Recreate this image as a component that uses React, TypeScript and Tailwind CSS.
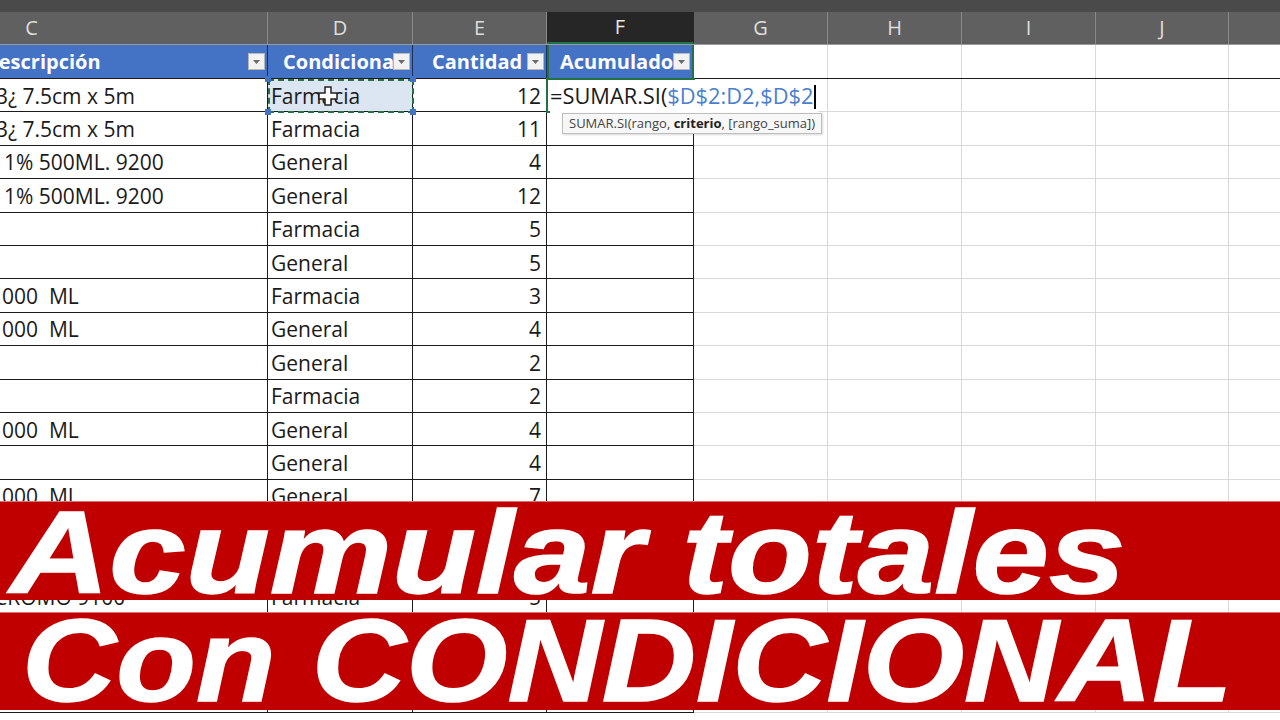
import React from "react";

const W = [
  "w-[472px]",
  "w-[145px]",
  "w-[134px]",
  "w-[147px]",
  "w-[134px]",
  "w-[134px]",
  "w-[134px]",
  "w-[133px]",
  "w-[200px]",
];
const LETTERS = ["C", "D", "E", "F", "G", "H", "I", "J", "K"];

type Row = { c: string; cpad: string; d: string; e: string };

const ROWS: Row[] = [
  { c: "3¿ 7.5cm x 5m", cpad: "pl-[200px]", d: "Farmacia", e: "12" },
  { c: "3¿ 7.5cm x 5m", cpad: "pl-[200px]", d: "Farmacia", e: "11" },
  { c: "1% 500ML. 9200", cpad: "pl-[208px]", d: "General", e: "4" },
  { c: "1% 500ML. 9200", cpad: "pl-[208px]", d: "General", e: "12" },
  { c: "", cpad: "pl-[200px]", d: "Farmacia", e: "5" },
  { c: "", cpad: "pl-[200px]", d: "General", e: "5" },
  { c: "1000  ML", cpad: "pl-[194px]", d: "Farmacia", e: "3" },
  { c: "1000  ML", cpad: "pl-[194px]", d: "General", e: "4" },
  { c: "", cpad: "pl-[200px]", d: "General", e: "2" },
  { c: "", cpad: "pl-[200px]", d: "Farmacia", e: "2" },
  { c: "1000  ML", cpad: "pl-[194px]", d: "General", e: "4" },
  { c: "", cpad: "pl-[200px]", d: "General", e: "4" },
  { c: "1000  ML", cpad: "pl-[194px]", d: "General", e: "7" },
  { c: "", cpad: "pl-[200px]", d: "Farmacia", e: "6" },
  { c: "", cpad: "pl-[200px]", d: "General", e: "3" },
  { c: "CROMO 9100", cpad: "pl-[198px]", d: "Farmacia", e: "5" },
  { c: "", cpad: "pl-[200px]", d: "General", e: "2" },
  { c: "", cpad: "pl-[200px]", d: "Farmacia", e: "4" },
  { c: "", cpad: "pl-[200px]", d: "General", e: "1" },
];

function FilterBtn() {
  return (
    <div className="absolute right-[2px] top-[8px] w-[17px] h-[17px] bg-[#f2f2f2] border border-[#b8b8b8] flex items-center justify-center">
      <svg width="9" height="6" viewBox="0 0 9 6">
        <path d="M1 1 L8 1 L4.5 5 Z" fill="#6b6b6b" />
      </svg>
    </div>
  );
}

function Cursor() {
  return (
    <svg
      className="absolute left-[318px] top-[86px]"
      width="20"
      height="20"
      viewBox="0 0 20 20"
    >
      <path
        d="M7 1 H13 V7 H19 V13 H13 V19 H7 V13 H1 V7 H7 Z"
        fill="#ffffff"
        stroke="#222"
        strokeWidth="1.5"
      />
    </svg>
  );
}

export default function App() {
  return (
    <div className="relative w-[1280px] h-[720px] overflow-hidden bg-white font-['Open_Sans',sans-serif] text-[#1a1a1a]">
      {/* top strip */}
      <div className="h-[12px] bg-[#4a4a4a]" />
      {/* column letters */}
      <div className="flex ml-[-204px] h-[33px] bg-[#606060] border-b border-[#9a9a9a]">
        {LETTERS.map((l, i) => (
          <div
            key={l}
            className={`${W[i]} shrink-0 flex items-center justify-center text-[20px] border-r ${
              i === 3
                ? "bg-[#262626] text-[#e8e8e8] border-[#262626] border-b-2 border-b-[#217346]"
                : "text-[#dedede] border-[#8a8a8a]"
            }`}
          >
            {l}
          </div>
        ))}
      </div>
      {/* table header row */}
      <div className="flex ml-[-204px] h-[34px] border-b border-[#1b1b1b]">
        <div className={`${W[0]} shrink-0 relative bg-[#4472c4] border-r border-[#1f2f55] text-white font-bold text-[20px] leading-[34px] pl-[188px]`}>
          Descripción
          <FilterBtn />
        </div>
        <div className={`${W[1]} shrink-0 relative bg-[#4472c4] border-r border-[#1f2f55] text-white font-bold text-[20px] leading-[34px] pl-[15px] overflow-hidden whitespace-nowrap`}>
          Condicional
          <FilterBtn />
        </div>
        <div className={`${W[2]} shrink-0 relative bg-[#4472c4] border-r border-[#1f2f55] text-white font-bold text-[20px] leading-[34px] pl-[19px]`}>
          Cantidad
          <FilterBtn />
        </div>
        <div className={`${W[3]} shrink-0 relative bg-[#4472c4] border-x-2 border-[#217346] text-white font-bold text-[20px] leading-[34px] pl-[11px] overflow-hidden whitespace-nowrap`}>
          Acumulado
          <FilterBtn />
        </div>
        {W.slice(4).map((w, i) => (
          <div key={i} className={`${w} shrink-0 border-r border-[#d9d9d9]`} />
        ))}
      </div>
      {/* data rows */}
      {ROWS.map((r, idx) => (
        <div key={idx} className="flex ml-[-204px] h-[33.4px] text-[21px] leading-none">
          <div className={`${W[0]} shrink-0 border-b border-r border-[#1b1b1b] ${r.cpad} pt-[2px] whitespace-pre flex items-center overflow-hidden`}>
            {r.c}
          </div>
          <div
            className={`${W[1]} shrink-0 border-b border-r border-[#1b1b1b] pl-[3px] pt-[2px] flex items-center ${
              idx === 0 ? "bg-[#dce6f2]" : ""
            }`}
          >
            {r.d}
          </div>
          <div className={`${W[2]} shrink-0 border-b border-r border-[#1b1b1b] pr-[5px] pt-[2px] flex items-center justify-end`}>
            {r.e}
          </div>
          <div className={`${W[3]} shrink-0 border-b border-r border-[#1b1b1b]`} />
          {W.slice(4).map((w, i) => (
            <div key={i} className={`${w} shrink-0 border-b border-r border-[#d9d9d9]`} />
          ))}
        </div>
      ))}

      {/* copy marquee on D2 */}
      <div className="absolute left-[268px] top-[79px] w-[146px] h-[34px] border-2 border-dashed border-[#217346]" />
      <div className="absolute left-[265px] top-[76px] w-[6px] h-[6px] bg-[#4472c4]" />
      <div className="absolute left-[410px] top-[76px] w-[6px] h-[6px] bg-[#4472c4]" />
      <div className="absolute left-[265px] top-[109px] w-[6px] h-[6px] bg-[#4472c4]" />
      <div className="absolute left-[410px] top-[109px] w-[6px] h-[6px] bg-[#4472c4]" />
      <Cursor />

      {/* active cell F2 */}
      <div className="absolute left-[546px] top-[78px] w-[149px] h-[35px] border-2 border-[#217346]" />
      <div className="absolute left-[690px] top-[109px] w-[6px] h-[6px] bg-[#217346] border border-white" />
      <div className="absolute left-[550px] top-[80px] h-[33px] flex items-center text-[21.8px] whitespace-nowrap bg-white pr-[2px]">
        <span>=SUMAR.SI(</span>
        <span className="text-[#4a7fd0]">$D$2:D2,$D$2</span>
        <span className="inline-block w-[1.5px] h-[24px] bg-black ml-[1px]" />
      </div>
      {/* tooltip */}
      <div className="absolute left-[562px] top-[113px] h-[21px] px-[6px] flex items-center bg-[#f7f7f7] border border-[#bdbdbd] text-[13px] text-[#444] whitespace-pre shadow-[1px_1px_2px_rgba(0,0,0,0.15)]">
        SUMAR.SI(rango, <b className="text-[#222]">criterio</b>, [rango_suma])
      </div>

      {/* banners */}
      <div className="absolute left-0 top-[501px] w-[1280px] h-[99px] bg-[#c00000] border-t border-[#e07070]">
        <span className="absolute left-[10px] top-[-8px] origin-left scale-x-[1.175] text-[117px] leading-none font-bold italic text-white [-webkit-text-stroke:1.5px_white] font-['Liberation_Sans',Arial,sans-serif] whitespace-nowrap">
          Acumular totales
        </span>
      </div>
      <div className="absolute left-0 top-[612px] w-[1280px] h-[98px] bg-[#c00000] border-t border-[#e07070]">
        <span className="absolute left-[22px] top-[-11px] origin-left scale-x-[1.115] text-[117px] leading-none font-bold italic text-white [-webkit-text-stroke:1.5px_white] font-['Liberation_Sans',Arial,sans-serif] whitespace-nowrap">
          Con CONDICIONAL
        </span>
      </div>
    </div>
  );
}
